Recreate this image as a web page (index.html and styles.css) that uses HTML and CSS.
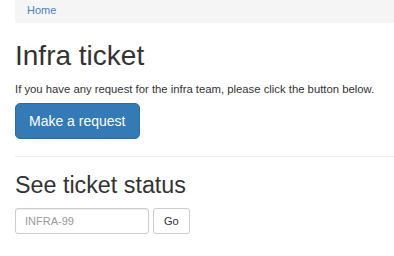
FILE: index.html
```html
<!doctype html>
<html lang="en">
<head>
    <meta charset="UTF-8">
    <meta name="viewport" content="width=device-width, initial-scale=1.0">
    <title>Infra ticket</title>
    <link rel="stylesheet" href="styles.css">
</head>
<body>
    <div class="container">
        <ol class="breadcrumb">
            <li><a href="#">Home</a></li>
        </ol>
        <h1>Infra ticket</h1>
        <p>If you have any request for the infra team, please click the button below.</p>
        <button class="btn btn-primary btn-lg">Make a request</button>
        <hr>
        <h2>See ticket status</h2>
        <form class="status-form">
            <input class="form-control" type="text" placeholder="INFRA-99">
            <button class="btn btn-default" type="submit">Go</button>
        </form>
    </div>
</body>
</html>
```

FILE: styles.css
```css
body {
    margin: 0;
    background: #fff;
    color: #333;
    font-family: "Liberation Sans", Arial, sans-serif;
    font-size: 11px;
    line-height: 1.42857;
}
.container {
    padding-left: 15px;
}
.breadcrumb {
    list-style: none;
    margin: 0;
    padding: 3px 12px 5px;
    height: 15px;
    background-color: #f5f5f5;
    border-radius: 0 0 0 3px;
    font-size: 11px;
}
.breadcrumb a {
    color: #4a82b8;
    text-decoration: none;
}
h1 {
    font-size: 28px;
    font-weight: 500;
    line-height: 1.1;
    margin: 18px 0 9px;
}
h2 {
    font-size: 23.3px;
    font-weight: 500;
    line-height: 1.1;
    margin: 1px 0 9px;
}
p {
    font-size: 11.3px;
    margin: 0 0 6px;
}
.btn {
    font-family: inherit;
    display: inline-block;
    border: 1px solid transparent;
    border-radius: 3px;
    cursor: pointer;
}
.btn-primary {
    color: #fff;
    background-color: #337ab7;
    border-color: #2e6da4;
}
.btn-lg {
    height: 36px;
    padding: 0 13px;
    font-size: 14px;
    border-radius: 5px;
}
.btn-default {
    color: #333;
    background-color: #fff;
    border-color: #ccc;
    height: 26px;
    padding: 0 10px;
    font-size: 11px;
}
hr {
    border: 0;
    border-top: 1px solid #eee;
    margin: 17px 0 16px;
}
.status-form {
    display: flex;
    gap: 4px;
}
.form-control {
    width: 134px;
    height: 26px;
    box-sizing: border-box;
    padding: 0 9px;
    font-family: inherit;
    font-size: 11px;
    color: #555;
    border: 1px solid #ccc;
    border-radius: 3px;
    box-shadow: inset 0 1px 1px rgba(0, 0, 0, .075);
}
.form-control::placeholder {
    color: #999;
}
```
